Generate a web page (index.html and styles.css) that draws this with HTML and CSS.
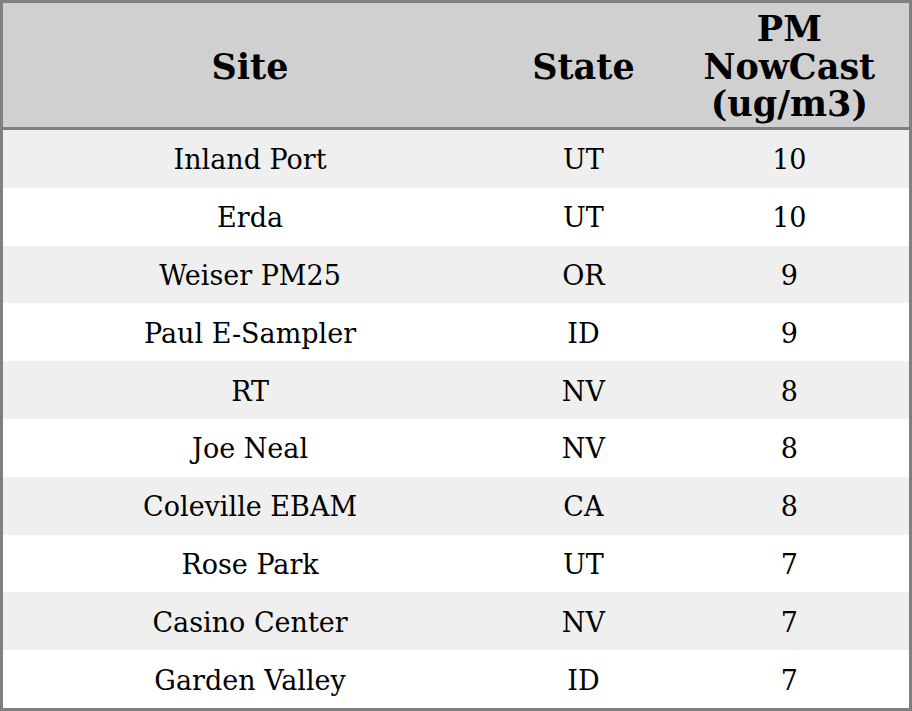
FILE: index.html
```html
<!DOCTYPE html>
<html>
<head>
<meta charset="utf-8">
<link rel="stylesheet" href="styles.css">
</head>
<body>
<table class="aq-table">
  <colgroup>
    <col class="col-site">
    <col class="col-state">
    <col class="col-pm">
  </colgroup>
  <thead>
    <tr>
      <th>Site</th>
      <th>State</th>
      <th>PM<br>NowCast<br>(ug/m3)</th>
    </tr>
  </thead>
  <tbody>
    <tr><td>Inland Port</td><td>UT</td><td>10</td></tr>
    <tr><td>Erda</td><td>UT</td><td>10</td></tr>
    <tr><td>Weiser PM25</td><td>OR</td><td>9</td></tr>
    <tr><td>Paul E-Sampler</td><td>ID</td><td>9</td></tr>
    <tr><td>RT</td><td>NV</td><td>8</td></tr>
    <tr><td>Joe Neal</td><td>NV</td><td>8</td></tr>
    <tr><td>Coleville EBAM</td><td>CA</td><td>8</td></tr>
    <tr><td>Rose Park</td><td>UT</td><td>7</td></tr>
    <tr><td>Casino Center</td><td>NV</td><td>7</td></tr>
    <tr><td>Garden Valley</td><td>ID</td><td>7</td></tr>
  </tbody>
</table>
</body>
</html>
```
FILE: styles.css
```css
html, body {
  margin: 0;
  padding: 0;
  background: #ffffff;
}
.aq-table {
  width: 912px;
  height: 711px;
  border-collapse: collapse;
  border: 3px solid #808080;
  table-layout: fixed;
  font-family: "DejaVu Serif", serif;
  color: #000;
}
.col-site { width: 494px; }
.col-state { width: 172px; }
.col-pm { width: 240px; }
.aq-table th {
  background: #d0d0d0;
  font-size: 35px;
  font-weight: bold;
  line-height: 37.5px;
  height: 121px;
  padding: 3px 0 0 0;
  text-align: center;
  border-bottom: 3px solid #808080;
}
.aq-table td {
  font-size: 27px;
  text-align: center;
  padding: 2px 0 0 0;
  height: 55.7px;
}
.aq-table tbody tr:nth-child(odd) td {
  background: #efefef;
}
```
